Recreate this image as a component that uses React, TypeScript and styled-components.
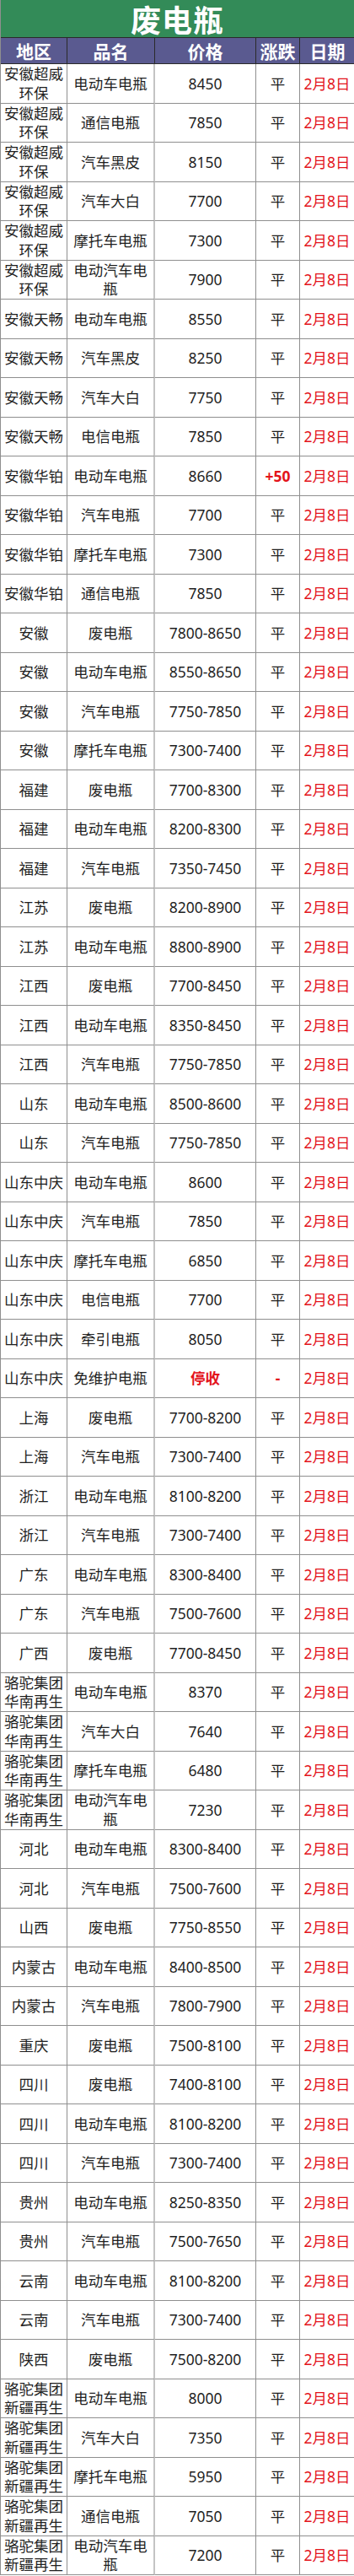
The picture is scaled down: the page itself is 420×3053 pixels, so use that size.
import styled, { createGlobalStyle } from "styled-components";

interface IRow {
  area: string;
  name: string;
  price: string;
  change?: string;
}

const A1 = "安徽超威环保";
const A2 = "安徽天畅";
const A3 = "安徽华铂";
const SD = "山东中庆";
const HN = "骆驼集团华南再生";
const XJ = "骆驼集团新疆再生";

const rows: IRow[] = [
  { area: A1, name: "电动车电瓶", price: "8450" },
  { area: A1, name: "通信电瓶", price: "7850" },
  { area: A1, name: "汽车黑皮", price: "8150" },
  { area: A1, name: "汽车大白", price: "7700" },
  { area: A1, name: "摩托车电瓶", price: "7300" },
  { area: A1, name: "电动汽车电瓶", price: "7900" },
  { area: A2, name: "电动车电瓶", price: "8550" },
  { area: A2, name: "汽车黑皮", price: "8250" },
  { area: A2, name: "汽车大白", price: "7750" },
  { area: A2, name: "电信电瓶", price: "7850" },
  { area: A3, name: "电动车电瓶", price: "8660", change: "+50" },
  { area: A3, name: "汽车电瓶", price: "7700" },
  { area: A3, name: "摩托车电瓶", price: "7300" },
  { area: A3, name: "通信电瓶", price: "7850" },
  { area: "安徽", name: "废电瓶", price: "7800-8650" },
  { area: "安徽", name: "电动车电瓶", price: "8550-8650" },
  { area: "安徽", name: "汽车电瓶", price: "7750-7850" },
  { area: "安徽", name: "摩托车电瓶", price: "7300-7400" },
  { area: "福建", name: "废电瓶", price: "7700-8300" },
  { area: "福建", name: "电动车电瓶", price: "8200-8300" },
  { area: "福建", name: "汽车电瓶", price: "7350-7450" },
  { area: "江苏", name: "废电瓶", price: "8200-8900" },
  { area: "江苏", name: "电动车电瓶", price: "8800-8900" },
  { area: "江西", name: "废电瓶", price: "7700-8450" },
  { area: "江西", name: "电动车电瓶", price: "8350-8450" },
  { area: "江西", name: "汽车电瓶", price: "7750-7850" },
  { area: "山东", name: "电动车电瓶", price: "8500-8600" },
  { area: "山东", name: "汽车电瓶", price: "7750-7850" },
  { area: SD, name: "电动车电瓶", price: "8600" },
  { area: SD, name: "汽车电瓶", price: "7850" },
  { area: SD, name: "摩托车电瓶", price: "6850" },
  { area: SD, name: "电信电瓶", price: "7700" },
  { area: SD, name: "牵引电瓶", price: "8050" },
  { area: SD, name: "免维护电瓶", price: "停收", change: "-" },
  { area: "上海", name: "废电瓶", price: "7700-8200" },
  { area: "上海", name: "汽车电瓶", price: "7300-7400" },
  { area: "浙江", name: "电动车电瓶", price: "8100-8200" },
  { area: "浙江", name: "汽车电瓶", price: "7300-7400" },
  { area: "广东", name: "电动车电瓶", price: "8300-8400" },
  { area: "广东", name: "汽车电瓶", price: "7500-7600" },
  { area: "广西", name: "废电瓶", price: "7700-8450" },
  { area: HN, name: "电动车电瓶", price: "8370" },
  { area: HN, name: "汽车大白", price: "7640" },
  { area: HN, name: "摩托车电瓶", price: "6480" },
  { area: HN, name: "电动汽车电瓶", price: "7230" },
  { area: "河北", name: "电动车电瓶", price: "8300-8400" },
  { area: "河北", name: "汽车电瓶", price: "7500-7600" },
  { area: "山西", name: "废电瓶", price: "7750-8550" },
  { area: "内蒙古", name: "电动车电瓶", price: "8400-8500" },
  { area: "内蒙古", name: "汽车电瓶", price: "7800-7900" },
  { area: "重庆", name: "废电瓶", price: "7500-8100" },
  { area: "四川", name: "废电瓶", price: "7400-8100" },
  { area: "四川", name: "电动车电瓶", price: "8100-8200" },
  { area: "四川", name: "汽车电瓶", price: "7300-7400" },
  { area: "贵州", name: "电动车电瓶", price: "8250-8350" },
  { area: "贵州", name: "汽车电瓶", price: "7500-7650" },
  { area: "云南", name: "电动车电瓶", price: "8100-8200" },
  { area: "云南", name: "汽车电瓶", price: "7300-7400" },
  { area: "陕西", name: "废电瓶", price: "7500-8200" },
  { area: XJ, name: "电动车电瓶", price: "8000" },
  { area: XJ, name: "汽车大白", price: "7350" },
  { area: XJ, name: "摩托车电瓶", price: "5950" },
  { area: XJ, name: "通信电瓶", price: "7050" },
  { area: XJ, name: "电动汽车电瓶", price: "7200" },
];

const GlobalStyle = createGlobalStyle`
  * { box-sizing: border-box; }
  body {
    margin: 0;
    background: #ffffff;
    font-family: "Noto Sans", "Noto Sans CJK SC", sans-serif;
  }
`;

const COLS = "79px 104px 120px 52px 65px";

const Sheet = styled.div`
  width: 420px;
  display: flex;
  flex-direction: column;
  border-left: 1px solid #8f8f8f;
`;

const TitleBar = styled.div`
  height: 45px;
  background-color: #338b58;
  color: #ffffff;
  font-size: 36px;
  font-weight: 700;
  display: flex;
  align-items: center;
  justify-content: center;
  letter-spacing: 1px;
  border-bottom: 1px solid #2a2a2a;
`;

const HeaderRow = styled.div`
  height: 31px;
  display: grid;
  grid-template-columns: ${COLS};
  background-color: #5a5a90;
  border-bottom: 1px solid #2a2a2a;
`;

const HeaderCell = styled.div`
  display: flex;
  align-items: center;
  justify-content: center;
  color: #ffffff;
  font-size: 21px;
  font-weight: 700;
  border-right: 1px solid #2a2a2a;
  &:last-child {
    border-right: 0;
  }
`;

const Row = styled.div`
  height: 46.5px;
  display: grid;
  grid-template-columns: ${COLS};
`;

const Cell = styled.div<{ $tone?: "red" | "strong"; $divider?: boolean }>`
  display: flex;
  align-items: center;
  justify-content: center;
  text-align: center;
  padding: 0 2px;
  font-size: 17.5px;
  line-height: 22.5px;
  color: ${(p) => (p.$tone ? "#e3131b" : "#1f1f1f")};
  font-weight: ${(p) => (p.$tone === "strong" ? 700 : 400)};
  border-bottom: 1px solid #8f8f8f;
  border-right: ${(p) => (p.$divider ? "2px solid #c4c4c4" : "1px solid #8f8f8f")};
  overflow: hidden;
`;

const headers = ["地区", "品名", "价格", "涨跌", "日期"];

export default function App() {
  return (
    <>
      <GlobalStyle />
      <Sheet>
        <TitleBar>废电瓶</TitleBar>
        <HeaderRow>
          {headers.map((h) => (
            <HeaderCell key={h}>{h}</HeaderCell>
          ))}
        </HeaderRow>
        {rows.map((r, i) => (
          <Row key={i}>
            <Cell>{r.area}</Cell>
            <Cell $divider>{r.name}</Cell>
            <Cell $tone={r.price === "停收" ? "strong" : undefined}>
              {r.price}
            </Cell>
            <Cell $tone={r.change ? "strong" : undefined}>
              {r.change ?? "平"}
            </Cell>
            <Cell $tone="red">2月8日</Cell>
          </Row>
        ))}
      </Sheet>
    </>
  );
}
